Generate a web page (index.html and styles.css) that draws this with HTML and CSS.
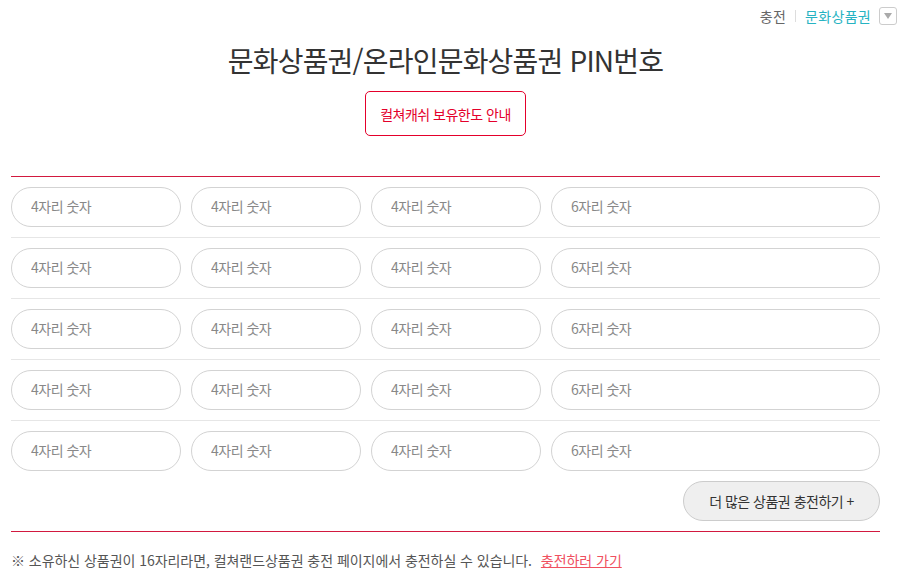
FILE: index.html
```html
<!DOCTYPE html>
<html lang="ko">
<head>
  <meta charset="UTF-8" />
  <meta name="viewport" content="width=device-width, initial-scale=1.0" />
  <title>문화상품권 PIN번호</title>
  <link rel="stylesheet" href="styles.css">
</head>
<body>
  <div class="top-nav">
    <span class="nav-item">충전</span>
    <span class="nav-sep"></span>
    <span class="nav-item active">문화상품권</span>
    <span class="nav-drop"><span class="tri"></span></span>
  </div>

  <div class="container">
    <h2>문화상품권/온라인문화상품권 PIN번호</h2>
    <div class="guide-wrap">
      <button class="guide-btn" type="button">컬쳐캐쉬 보유한도 안내</button>
    </div>

    <div class="pin-list" id="pinList">
      <!-- rows rendered below -->
    </div>

    <div class="more-wrap">
      <button class="more-btn" type="button">더 많은 상품권 충전하기 +</button>
    </div>

    <p class="note">※ 소유하신 상품권이 16자리라면, 컬쳐랜드상품권 충전 페이지에서 충전하실 수 있습니다. <a href="#">충전하러 가기</a></p>
  </div>

<script>
const pinList = document.getElementById("pinList");
for (let i = 0; i < 5; i++) {
  const row = document.createElement("div");
  row.className = "pin-row";
  row.innerHTML =
    '<input type="text" class="pin short" placeholder="4자리 숫자">' +
    '<input type="text" class="pin short" placeholder="4자리 숫자">' +
    '<input type="text" class="pin short" placeholder="4자리 숫자">' +
    '<input type="text" class="pin long" placeholder="6자리 숫자">';
  pinList.appendChild(row);
}
</script>
</body>
</html>
```

FILE: styles.css
```css
body {
  margin: 0;
  font-family: "Noto Sans CJK KR", "Noto Sans", sans-serif;
  background: #ffffff;
  color: #333;
}

.top-nav {
  display: flex;
  justify-content: flex-end;
  align-items: center;
  height: 31px;
  padding-right: 1px;
  font-size: 14px;
}

.nav-item {
  color: #666;
  letter-spacing: 0.3px;
}

.nav-item.active {
  color: #26b3c2;
}

.nav-sep {
  width: 1px;
  height: 12px;
  background: #ddd;
  margin: 0 9px;
}

.nav-drop {
  width: 16px;
  height: 16px;
  border: 1px solid #ccc;
  border-radius: 3px;
  margin-left: 8px;
  display: flex;
  justify-content: center;
  align-items: center;
}

.tri {
  width: 0;
  height: 0;
  border-left: 4px solid transparent;
  border-right: 4px solid transparent;
  border-top: 6px solid #aaa;
}

.container {
  width: 869px;
  margin-left: 11px;
}

h2 {
  margin: 8px 0 0;
  text-align: center;
  font-size: 28px;
  font-weight: 400;
  letter-spacing: -0.8px;
  line-height: 42px;
  color: #333;
}

.guide-wrap {
  text-align: center;
  margin-top: 10px;
}

.guide-btn {
  width: 161px;
  height: 45px;
  border: 1px solid #e4002b;
  border-radius: 5px;
  background: #fff;
  color: #e4002b;
  font-family: inherit;
  font-size: 14px;
  letter-spacing: -0.5px;
}

.pin-list {
  margin-top: 40px;
  border-top: 1px solid #d2193f;
}

.pin-row {
  display: flex;
  gap: 10px;
  padding: 10px 0;
  border-bottom: 1px solid #e6e6e6;
}

.pin-row:last-child {
  border-bottom: none;
  padding-bottom: 0;
}

.pin {
  box-sizing: border-box;
  height: 40px;
  border: 1px solid #d3d3d3;
  border-radius: 20px;
  padding: 0 19px 2px;
  font-family: inherit;
  font-size: 14px;
  letter-spacing: -0.5px;
  color: #333;
  outline: none;
}

.pin::placeholder {
  color: #888;
}

.pin.short {
  width: 170px;
}

.pin.long {
  width: 329px;
}

.more-wrap {
  display: flex;
  justify-content: flex-end;
  padding: 10px 0;
  border-bottom: 1px solid #d2193f;
}

.more-btn {
  width: 197px;
  height: 40px;
  border: 1px solid #ccc;
  border-radius: 20px;
  background: #efefef;
  color: #333;
  font-family: inherit;
  font-size: 14px;
  letter-spacing: -0.5px;
}

.note {
  margin: 18px 0 0;
  font-size: 14px;
  color: #555;
  letter-spacing: -0.05px;
}

.note a {
  color: #f0505f;
  margin-left: 5px;
}
```
